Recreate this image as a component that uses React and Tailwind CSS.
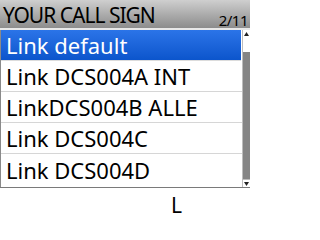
import React from "react";

const rows = [
    "Link default",
    "Link DCS004A INT",
    "LinkDCS004B ALLE",
    "Link DCS004C",
    "Link DCS004D",
];

const font = { fontFamily: '"Noto Sans", "Open Sans", sans-serif' };

export default function App() {
    return (
        <div className="w-[250px] h-[219px] bg-white" style={font}>
            {/* title bar */}
            <div className="h-[28px] flex items-end justify-between pl-[3px] pr-[2px] bg-gradient-to-b from-[#cfcfcf] to-[#8c8c8c] text-black">
                <span className="text-[21px] leading-[26px] tracking-[-1px]">YOUR CALL SIGN</span>
                <span className="text-[15px] leading-[16px] tracking-[-0.5px]">2/11</span>
            </div>
            <div className="h-[2px] bg-[#e8e8e8]" />

            {/* list + scrollbar */}
            <div className="flex h-[158px] border-b border-[#7a7a7a]">
                <div className="flex-1 flex flex-col border-l border-[#8a8a8a]">
                    {rows.map((r, i) => (
                        <div
                            key={r}
                            className={
                                i === 0
                                    ? "h-[31px] flex items-center pl-[5px] text-white bg-gradient-to-b from-[#2b74e8] to-[#0b55cc] mr-[1px] border-b border-[#dcdcdc]"
                                    : "h-[31px] flex items-center pl-[5px] text-black border-b border-[#d6d6d6] last:border-b-0"
                            }
                        >
                            <span className="text-[22px] leading-none">{r}</span>
                        </div>
                    ))}
                </div>
                <div className="w-[8px] flex flex-col bg-white border-l border-[#bdbdbd]">
                    <div className="h-[8px] flex items-center justify-center">
                        <svg width="5" height="4" viewBox="0 0 5 4">
                            <path d="M2.5 0 L5 4 L0 4 Z" fill="#222" />
                        </svg>
                    </div>
                    <div className="h-[14px]" />
                    <div className="flex-1 bg-[#858585]" />
                    <div className="h-[8px] flex items-center justify-center border-t border-[#bdbdbd]">
                        <svg width="5" height="4" viewBox="0 0 5 4">
                            <path d="M0 0 L5 0 L2.5 4 Z" fill="#222" />
                        </svg>
                    </div>
                </div>
            </div>

            <div className="flex pl-[171px] pt-[6px]">
                <span className="text-[21px] leading-[22px] text-black">L</span>
            </div>
        </div>
    );
}
